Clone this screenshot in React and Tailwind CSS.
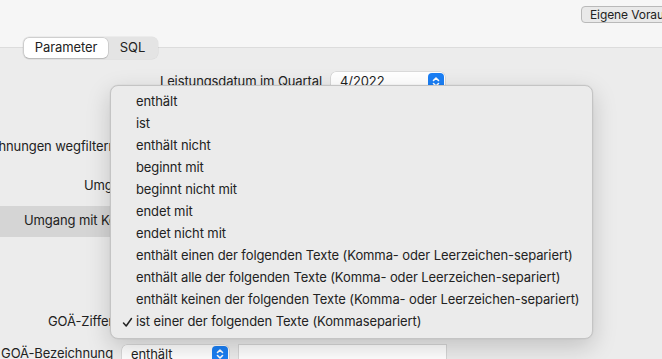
import React from "react";

const options = [
  "enthält",
  "ist",
  "enthält nicht",
  "beginnt mit",
  "beginnt nicht mit",
  "endet mit",
  "endet nicht mit",
  "enthält einen der folgenden Texte (Komma- oder Leerzeichen-separiert)",
  "enthält alle der folgenden Texte (Komma- oder Leerzeichen-separiert)",
  "enthält keinen der folgenden Texte (Komma- oder Leerzeichen-separiert)",
  "ist einer der folgenden Texte (Kommasepariert)",
];

const Stepper = () => (
  <span className="flex h-[17px] w-[16px] items-center justify-center rounded-[4px] bg-[#1b7ff5]">
    <svg width="8" height="12" viewBox="0 0 8 12" fill="none" stroke="white" strokeWidth="1.6" strokeLinecap="round" strokeLinejoin="round">
      <path d="M1.5 4.5 L4 2 L6.5 4.5" />
      <path d="M1.5 7.5 L4 10 L6.5 7.5" />
    </svg>
  </span>
);

const Select = ({ value, width }) => (
  <div
    className={`flex h-[19px] items-center justify-between rounded-[5px] bg-white pl-[9px] pr-[1px] shadow-[0_0_0_0.5px_rgba(0,0,0,0.15),0_1px_1px_rgba(0,0,0,0.1)] ${width}`}
  >
    <span className="text-[13px] leading-none text-[#1f1f1f]">{value}</span>
    <Stepper />
  </div>
);

const Label = ({ children, width }) => (
  <div className={`flex shrink-0 justify-end whitespace-nowrap ${width}`}>
    <span>{children}</span>
  </div>
);

const App = () => {
  return (
    <div
      className="relative h-[359px] w-[662px] overflow-hidden bg-[#ececec] text-[13px] tracking-[-0.1px] text-[#222]"
      style={{ fontFamily: "Inter, 'Liberation Sans', sans-serif" }}
    >
      {/* Header */}
      <div className="h-[48px] border-b border-[#dcdcdc] bg-[#f6f6f6]">
        <div className="flex pl-[581px] pt-[6px]">
          <div className="flex h-[17px] shrink-0 items-center rounded-[4px] border border-[#b9b9b9] bg-[#e9e9e9] px-[8px] text-[12px] leading-none whitespace-nowrap">
            Eigene Voraussetzungen
          </div>
        </div>
      </div>

      {/* Tabs */}
      <div className="-mt-[11px] ml-[23px] flex h-[22px] w-[135px] rounded-[6px] bg-[#e4e4e4] p-[1px] shadow-[0_0_0_0.5px_rgba(0,0,0,0.08)]">
        <div className="flex w-[84px] items-center justify-center rounded-[5px] bg-white text-[13px] shadow-[0_0_0_0.5px_rgba(0,0,0,0.18),0_1px_1px_rgba(0,0,0,0.1)]">
          Parameter
        </div>
        <div className="flex flex-1 items-center justify-center text-[13px]">SQL</div>
      </div>

      {/* Form */}
      <div className="flex flex-col">
        <div className="mt-[13px] flex items-center gap-[9px]">
          <Label width="w-[322px]">Leistungsdatum im Quartal</Label>
          <Select value="4/2022" width="w-[114px]" />
        </div>

        <div className="mt-[45px] flex items-center">
          <Label width="w-[116px]">Stornierte Rechnungen wegfiltern</Label>
        </div>

        <div className="mt-[20px] flex items-center">
          <Label width="w-[84px]" />
          <span className="whitespace-nowrap">Umgang mit Gutschriften</span>
        </div>

        <div className="mt-[10px] flex h-[31px] w-[330px] items-center bg-[#d5d5d5] pl-[24px] whitespace-nowrap">
          Umgang mit Korrekturen
        </div>

        <div className="mt-[75px] flex items-center pl-[48px] whitespace-nowrap">
          GOÄ-Ziffern
        </div>

        <div className="mt-[13px] flex items-center">
          <Label width="w-[113px]">GOÄ-Bezeichnung</Label>
          <div className="ml-[9px]">
            <Select value="enthält" width="w-[107px]" />
          </div>
          <div className="ml-[9px] h-[20px] w-[209px] border border-[#d6d6d6] bg-white" />
        </div>
      </div>

      {/* Dropdown menu */}
      <div className="absolute left-[110px] top-[85px] w-[483px] rounded-[8px] border border-[#c4c4c4] bg-[#ebebeb] py-[5px] shadow-[0_8px_24px_rgba(0,0,0,0.18),0_0_0_0.5px_rgba(0,0,0,0.05)]">
        {options.map((opt, i) => (
          <div key={i} className="flex h-[22px] items-center whitespace-nowrap">
            <span className="flex w-[25px] justify-end pr-[3px]">
              {i === options.length - 1 && (
                <svg width="11" height="11" viewBox="0 0 11 11" fill="none" stroke="#222" strokeWidth="1.5" strokeLinecap="round" strokeLinejoin="round">
                  <path d="M1.5 6 L4.2 9 L9.5 1.5" />
                </svg>
              )}
            </span>
            <span className="text-[13px] text-[#222]">{opt}</span>
          </div>
        ))}
      </div>
    </div>
  );
};

export default App;
